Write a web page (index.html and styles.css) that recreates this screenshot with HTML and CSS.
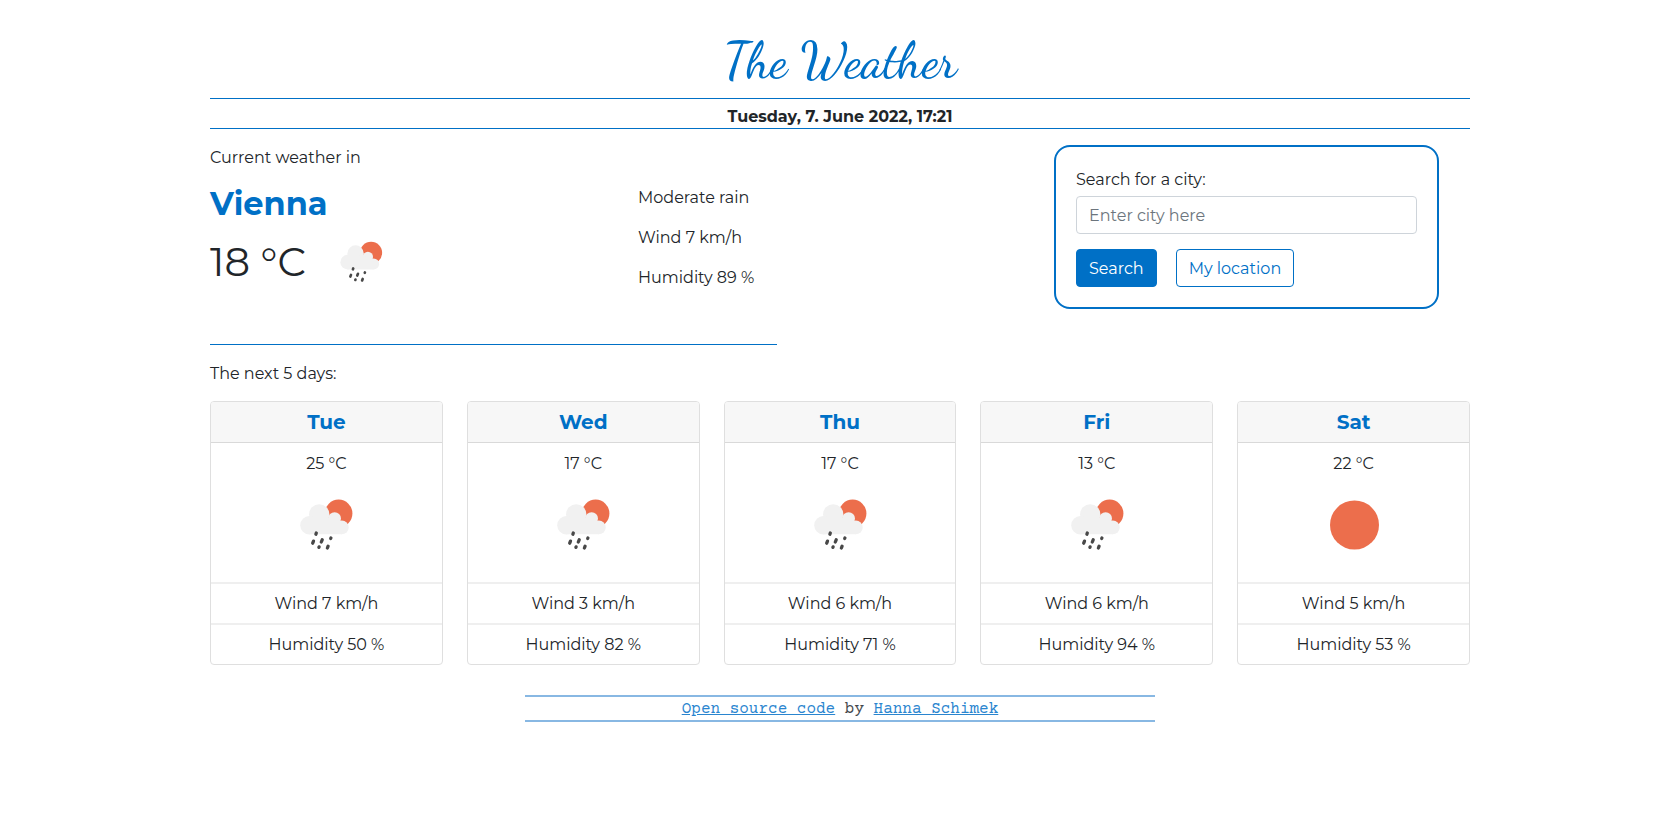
FILE: index.html
```html
<!DOCTYPE html>
<html lang="en">
<head>
<meta charset="utf-8">
<title>The Weather</title>
<link rel="stylesheet" href="styles.css">
</head>
<body>
<svg class="symbols" aria-hidden="true">
  <symbol id="rain" viewBox="0 0 100 100">
    <circle cx="62.6" cy="38.4" r="13.8" fill="#ec6e4c"/>
    <g fill="#f1f1f1">
      <circle cx="43.2" cy="39.4" r="10.2"/>
      <circle cx="33.4" cy="50.2" r="9.2"/>
      <circle cx="58.6" cy="43.6" r="6.4"/>
      <circle cx="65.8" cy="52.4" r="6.9"/>
      <path d="M33 42h12l18 2 4 8-1.2 7.3H33z"/>
    </g>
    <g stroke="#484848" stroke-width="3.3" stroke-linecap="round">
      <path d="M40.3 58l-.4 1.2M37.5 66.1l-.8 2.1M46.2 64.8l-.9 2.2M54.9 63l-.2.5M43.1 71.9l-.2.5M52.1 71.2l-.7 1.8"/>
    </g>
  </symbol>
  <symbol id="sun" viewBox="0 0 100 100"><circle cx="50.5" cy="50" r="24.5" fill="#ec6e4c"/></symbol>
</svg>
<div class="page">
  <header>
    <h1 class="title">The Weather</h1>
    <p class="date">Tuesday, 7. June 2022, 17:21</p>
  </header>
  <main>
    <section class="current">
      <div class="place">
        <p class="label">Current weather in</p>
        <h2 class="city">Vienna</h2>
        <div class="now">
          <span class="temperature">18 °C</span>
          <svg class="now-icon" role="img" aria-label="Moderate rain"><use href="#rain"/></svg>
        </div>
      </div>
      <div class="details">
        <p>Moderate rain</p>
        <p>Wind 7 km/h</p>
        <p>Humidity 89 %</p>
      </div>
      <form class="search">
        <label for="city">Search for a city:</label>
        <input id="city" type="text" placeholder="Enter city here">
        <div class="buttons">
          <button class="button primary" type="submit">Search</button>
          <button class="button" type="button">My location</button>
        </div>
      </form>
    </section>
    <hr class="divider">
    <p class="label">The next 5 days:</p>
    <section class="forecast">
      <article class="card">
        <h3>Tue</h3>
        <div class="sky"><p>25 °C</p><svg role="img" aria-label="Rain"><use href="#rain"/></svg></div>
        <p class="fact">Wind 7 km/h</p>
        <p class="fact">Humidity 50 %</p>
      </article>
      <article class="card">
        <h3>Wed</h3>
        <div class="sky"><p>17 °C</p><svg role="img" aria-label="Rain"><use href="#rain"/></svg></div>
        <p class="fact">Wind 3 km/h</p>
        <p class="fact">Humidity 82 %</p>
      </article>
      <article class="card">
        <h3>Thu</h3>
        <div class="sky"><p>17 °C</p><svg role="img" aria-label="Rain"><use href="#rain"/></svg></div>
        <p class="fact">Wind 6 km/h</p>
        <p class="fact">Humidity 71 %</p>
      </article>
      <article class="card">
        <h3>Fri</h3>
        <div class="sky"><p>13 °C</p><svg role="img" aria-label="Rain"><use href="#rain"/></svg></div>
        <p class="fact">Wind 6 km/h</p>
        <p class="fact">Humidity 94 %</p>
      </article>
      <article class="card">
        <h3>Sat</h3>
        <div class="sky"><p>22 °C</p><svg role="img" aria-label="Sun"><use href="#sun"/></svg></div>
        <p class="fact">Wind 5 km/h</p>
        <p class="fact">Humidity 53 %</p>
      </article>
    </section>
  </main>
  <footer class="footer"><a href="#">Open source code</a> by <a href="#">Hanna Schimek</a></footer>
</div>
</body>
</html>
```

FILE: styles.css
```css
* { box-sizing: border-box; }
body {
  margin: 0;
  background: #fff;
  color: #212529;
  font: 16px/24px Montserrat, Inter, "Open Sans", sans-serif;
}
h1, h2, h3, p { margin: 0; }
.symbols { position: absolute; width: 0; height: 0; }
.page { width: 75%; margin: 0 auto; padding-top: 31px; }

.title {
  padding-bottom: 7px;
  color: #0070c6;
  font: 500 50px/60px "Dancing Script", "Liberation Serif", cursive;
  text-align: center;
}
.date {
  padding: 6px 0 0;
  border: solid #0070c6;
  border-width: 1px 0;
  font-weight: 700;
  line-height: 23px;
  text-align: center;
}

.current {
  display: grid;
  grid-template-columns: repeat(3, 1fr);
  align-items: start;
  margin: 16px -12px 0;
}
.place { padding: 1px 0 0 12px; }
.city { margin-top: 16px; color: #0070c6; font-size: 32px; line-height: 36px; }
.now { display: flex; align-items: center; gap: 15px; }
.temperature { font-size: 40px; line-height: 48px; }
.now-icon { width: 80px; height: 80px; }
.details { display: grid; gap: 16px; padding: 41px 0 0 12px; }

.search {
  width: 90%;
  padding: 21px 20px 20px;
  border: 2px solid #0070c6;
  border-radius: 16px;
}
.search label { display: block; margin-bottom: 4px; }
.search input {
  display: block;
  width: 100%;
  height: 38px;
  padding: 0 12px;
  border: 1px solid #ced4da;
  border-radius: 4px;
  font: inherit;
}
.search input::placeholder { color: #6c757d; opacity: 1; }
.buttons { display: flex; gap: 19px; margin-top: 15px; }
.button {
  height: 38px;
  padding: 1px 12px 0;
  border: 1px solid #0070c6;
  border-radius: 4px;
  background: #fff;
  color: #0070c6;
  font: inherit;
}
.primary { background: #0070c6; color: #fff; }

.divider { width: 45%; margin: 35px 0 17px; border: 0; border-top: 1px solid #0070c6; }
.forecast { display: grid; grid-template-columns: repeat(5, 1fr); gap: 24px; margin-top: 15px; text-align: center; }
.card { overflow: hidden; border: 1px solid #dfdfdf; border-radius: 4px; }
.card h3 {
  padding: 8px 0;
  border-bottom: 1px solid #d9d9d9;
  background: #f7f7f7;
  color: #0070c6;
  font-size: 20px;
  line-height: 24px;
}
.sky { padding: 9px 0 7px; }
.sky p { line-height: 23px; }
.sky svg { display: block; width: 100px; height: 100px; margin: 0 auto; }
.fact { padding: 8px 0 7px; border-top: 2px solid #efefef; }

.footer {
  width: 50%;
  margin: 30px auto 0;
  padding-top: 1px;
  border: solid #88b8e3;
  border-width: 2px 0;
  color: #44484c;
  font: 16px/22px "Courier Prime", "Liberation Mono", monospace;
  text-align: center;
}
.footer a { color: #2a85cf; }
```
